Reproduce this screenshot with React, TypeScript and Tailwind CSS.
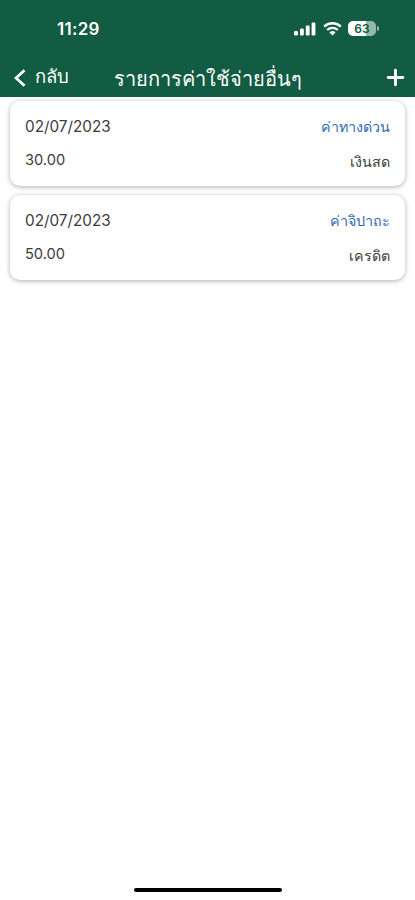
import { Plus } from "lucide-react"

const expenses = [
  { date: "02/07/2023", amount: "30.00", category: "ค่าทางด่วน", payment: "เงินสด" },
  { date: "02/07/2023", amount: "50.00", category: "ค่าจิปาถะ", payment: "เครดิต" },
]

function StatusBar() {
  return (
    <div className="flex h-[58px] items-center justify-between pr-[36px] pl-[57px]">
      <span className="pt-[2px] text-[17px] font-semibold tracking-[0.3px]">11:29</span>
      <div className="flex items-center">
        <svg width="23" height="15" viewBox="0 0 23 15" fill="currentColor">
          <rect x="1" y="9" width="4" height="4.5" rx="1.3" />
          <rect x="7" y="6.5" width="3.8" height="7" rx="1.2" />
          <rect x="12.8" y="3.5" width="3.8" height="10" rx="1.2" />
          <rect x="18.6" y="0.5" width="3.8" height="13" rx="1.2" />
        </svg>
        <svg className="ml-[7px]" width="19" height="15" viewBox="0 0 19 15" fill="none" stroke="currentColor" strokeWidth="2.4">
          <path d="M1.2 4.7a11.8 11.8 0 0 1 16.6 0M4.2 8a7.6 7.6 0 0 1 10.6 0" />
          <path d="M9.5 13.4l-3-3a4.3 4.3 0 0 1 6 0z" fill="currentColor" stroke="none" />
        </svg>
        <div className="-mt-px ml-[6px] flex items-center">
          <div className="h-[15px] w-[28px] rounded-[5px] bg-linear-to-r from-white from-63% to-[#94b8a8] to-63% text-center text-[12px] leading-[15px] font-semibold text-[#115c43]">
            63
          </div>
          <div className="ml-px h-[5px] w-[2px] rounded-r-full bg-[#94b8a8]" />
        </div>
      </div>
    </div>
  )
}

function Header() {
  return (
    <header className="h-[97px] bg-[#115c43] text-white">
      <StatusBar />
      <div className="grid h-[39px] grid-cols-[1fr_auto_1fr] items-center pr-[10px] pl-[14px]">
        <button type="button" className="flex items-center gap-[9px] text-[18.5px] leading-none">
          <svg width="12" height="18" viewBox="0 0 12 18" fill="none" stroke="currentColor" strokeWidth="2.8">
            <path d="M10.5 1.2L2 9l8.5 7.8" />
          </svg>
          <span className="pb-[3px]">กลับ</span>
        </button>
        <h1 className="-ml-[4px] pt-[3px] text-[20px] leading-[30px]">รายการค่าใช้จ่ายอื่นๆ</h1>
        <Plus size={25} strokeWidth={2.8} className="-mr-[3px] justify-self-end" />
      </div>
    </header>
  )
}

export default function App() {
  return (
    <div className="flex h-[900px] w-full flex-col bg-white font-['Inter','Noto_Sans',sans-serif]">
      <Header />
      <main className="flex flex-1 flex-col gap-[9px] px-[10px] pt-[4px]">
        {expenses.map((item) => (
          <div
            key={item.category}
            className="flex h-[85px] flex-col gap-[10px] rounded-[10px] bg-white pt-[14px] pr-[15px] pl-[15px] text-[#3c3c3c] shadow-[0_1px_5px_rgba(0,0,0,0.32)]"
          >
            <div className="flex h-6 items-center justify-between">
              <span className="text-[15.3px]">{item.date}</span>
              <span className="text-[14.3px] text-[#2f68b0]">{item.category}</span>
            </div>
            <div className="flex h-6 items-center justify-between">
              <span className="text-[14.6px]">{item.amount}</span>
              <span className="pt-px text-[14.3px]">{item.payment}</span>
            </div>
          </div>
        ))}
      </main>
      <div className="mb-[8px] ml-[134px] h-[4px] w-[148px] rounded-full bg-black" />
    </div>
  )
}
